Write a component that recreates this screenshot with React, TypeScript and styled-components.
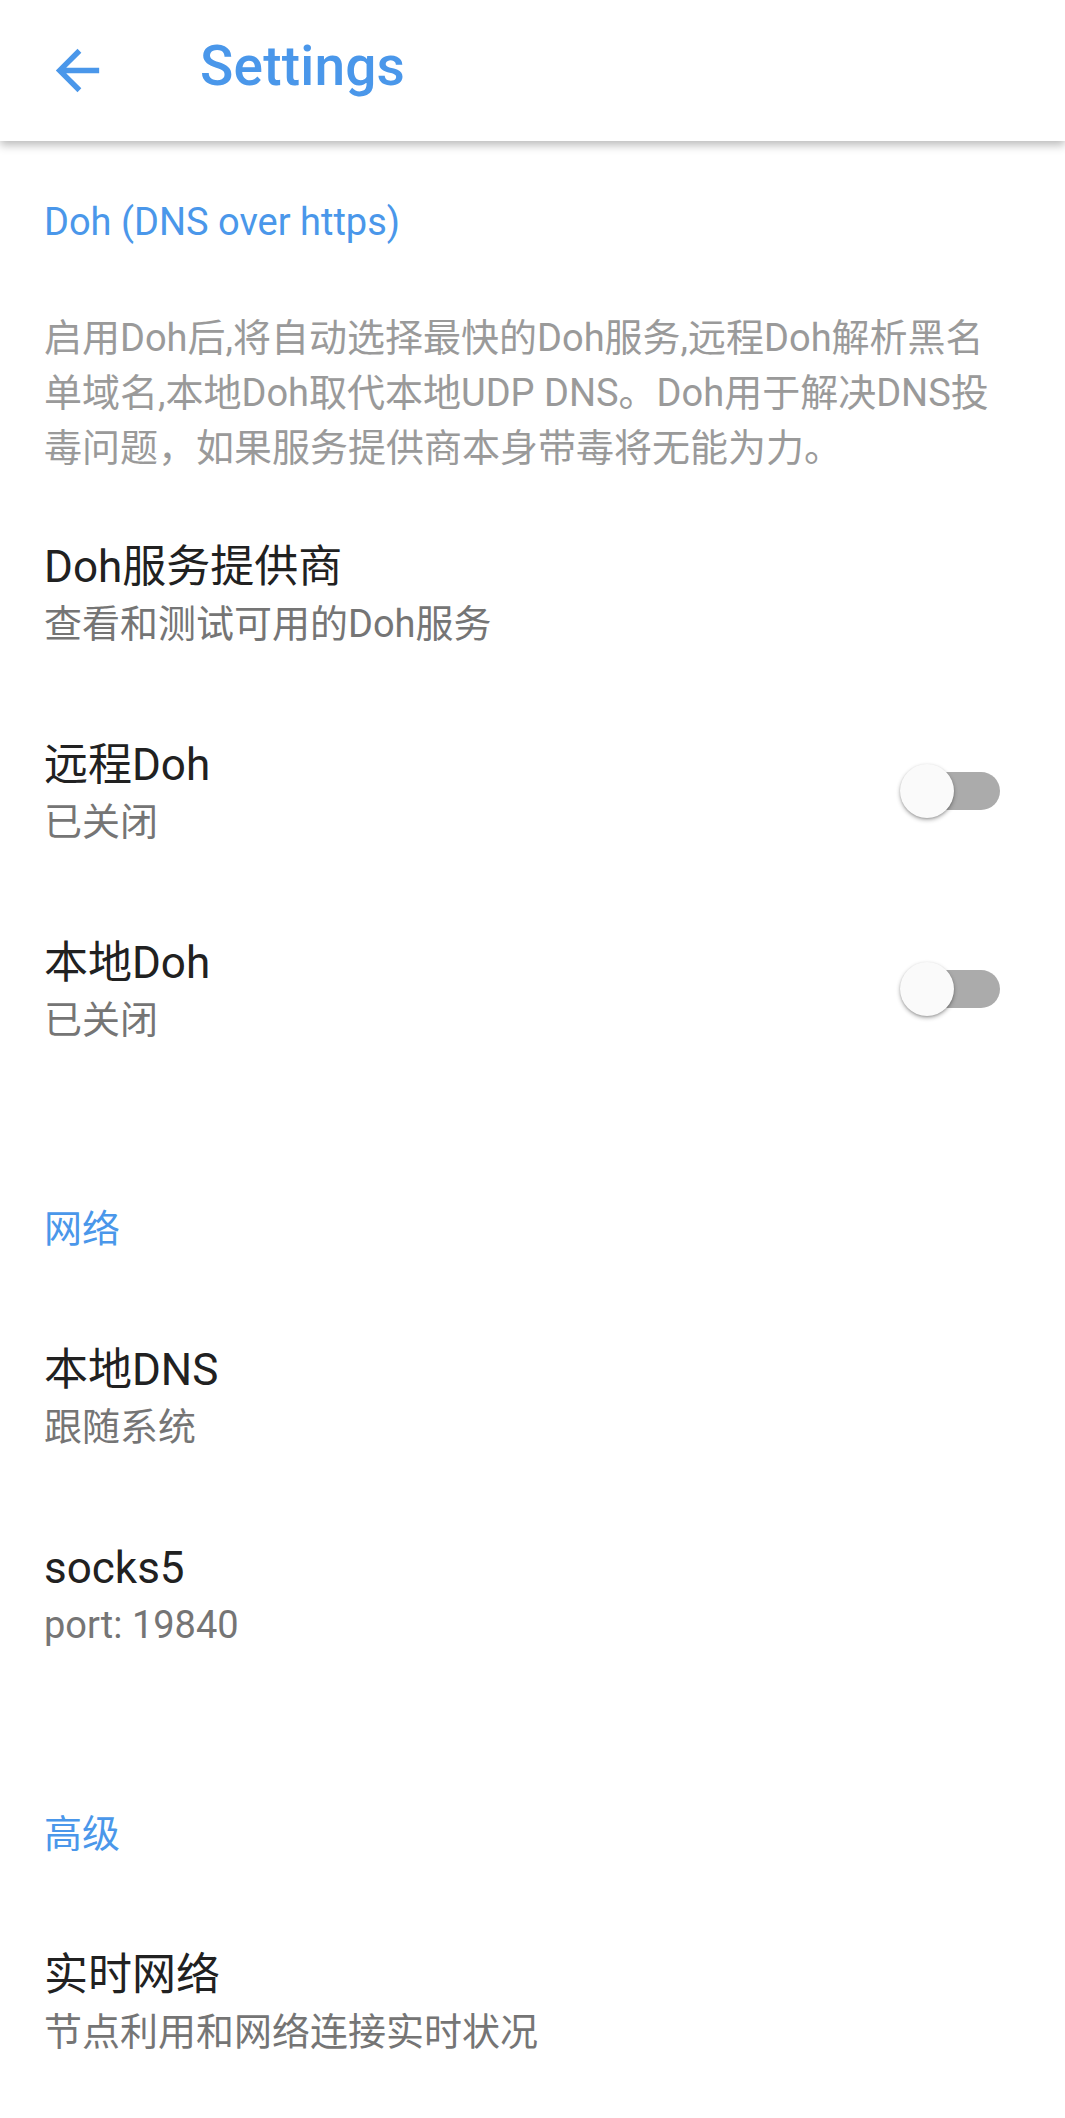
import React from "react";
import styled, { createGlobalStyle } from "styled-components";

const GlobalStyle = createGlobalStyle`
  html, body { margin: 0; padding: 0; background: #ffffff; }
  body { font-family: Roboto, "Noto Sans CJK SC", sans-serif; -webkit-font-smoothing: antialiased; }
`;

const BLUE = "#4a97ea";

const Page = styled.div`
  width: 1065px;
  min-height: 2118px;
  background: #fff;
  font-family: Roboto, "Noto Sans CJK SC", sans-serif;
`;

const Toolbar = styled.header`
  position: relative;
  z-index: 2;
  height: 141px;
  display: flex;
  align-items: center;
  background: #fff;
  box-shadow: 0 4px 9px rgba(0, 0, 0, 0.28);
`;

const BackButton = styled.button`
  width: 65px;
  height: 65px;
  margin-left: 45px;
  padding: 0;
  border: none;
  background: transparent;
  display: flex;
  align-items: center;
  justify-content: center;
  color: ${BLUE};
`;

const Title = styled.h1`
  margin: 0 0 8px 90px;
  font-size: 55px;
  font-weight: 500;
  color: ${BLUE};
  line-height: 1;
  letter-spacing: 0.2px;
`;

const Category = styled.div<{ $first?: boolean }>`
  margin-top: ${(p) => (p.$first ? 0 : 60)}px;
  padding: 56px 44px 43px;
  font-size: 38px;
  line-height: 50px;
  color: ${BLUE};
`;

const Description = styled.p`
  margin: 0;
  padding: 21px 44px 18px;
  font-size: 38px;
  line-height: 55px;
  color: #9a9a9a;
`;

const Row = styled.div`
  height: 198px;
  box-sizing: border-box;
  padding: 0 65px 0 44px;
  display: flex;
  align-items: center;
  justify-content: space-between;
`;

const TextBlock = styled.div`
  display: flex;
  flex-direction: column;
  padding-top: 6px;
`;

const RowTitle = styled.div`
  font-size: 44px;
  line-height: 57px;
  color: #212121;
`;

const Summary = styled.div`
  font-size: 38px;
  line-height: 57px;
  color: #757575;
`;

const SwitchTrack = styled.div`
  position: relative;
  width: 93px;
  height: 38px;
  border-radius: 19px;
  background: #ababab;
`;

const SwitchThumb = styled.div`
  position: absolute;
  left: -7px;
  top: -8px;
  width: 54px;
  height: 54px;
  border-radius: 50%;
  background: #fafafa;
  box-shadow: 0 2px 4px rgba(0, 0, 0, 0.3), 0 1px 2px rgba(0, 0, 0, 0.15);
`;

const Toggle = () => (
  <SwitchTrack>
    <SwitchThumb />
  </SwitchTrack>
);

type PrefProps = { title: string; summary: string; toggle?: boolean };

const Pref = ({ title, summary, toggle }: PrefProps) => (
  <Row>
    <TextBlock>
      <RowTitle>{title}</RowTitle>
      <Summary>{summary}</Summary>
    </TextBlock>
    {toggle && <Toggle />}
  </Row>
);

export default function App() {
  return (
    <Page>
      <GlobalStyle />
      <Toolbar>
        <BackButton aria-label="back">
          <svg width="65" height="65" viewBox="0 0 24 24" fill="currentColor">
            <path d="M20 11H7.83l5.59-5.59L12 4l-8 8 8 8 1.41-1.41L7.83 13H20v-2z" />
          </svg>
        </BackButton>
        <Title>Settings</Title>
      </Toolbar>

      <Category $first>Doh (DNS over https)</Category>
      <Description>
        启用Doh后,将自动选择最快的Doh服务,远程Doh解析黑名单域名,本地Doh取代本地UDP DNS。Doh用于解决DNS投毒问题，如果服务提供商本身带毒将无能为力。
      </Description>
      <Pref title="Doh服务提供商" summary="查看和测试可用的Doh服务" />
      <Pref title="远程Doh" summary="已关闭" toggle />
      <Pref title="本地Doh" summary="已关闭" toggle />

      <Category>网络</Category>
      <Pref title="本地DNS" summary="跟随系统" />
      <Pref title="socks5" summary="port: 19840" />

      <Category>高级</Category>
      <Pref title="实时网络" summary="节点利用和网络连接实时状况" />
    </Page>
  );
}
